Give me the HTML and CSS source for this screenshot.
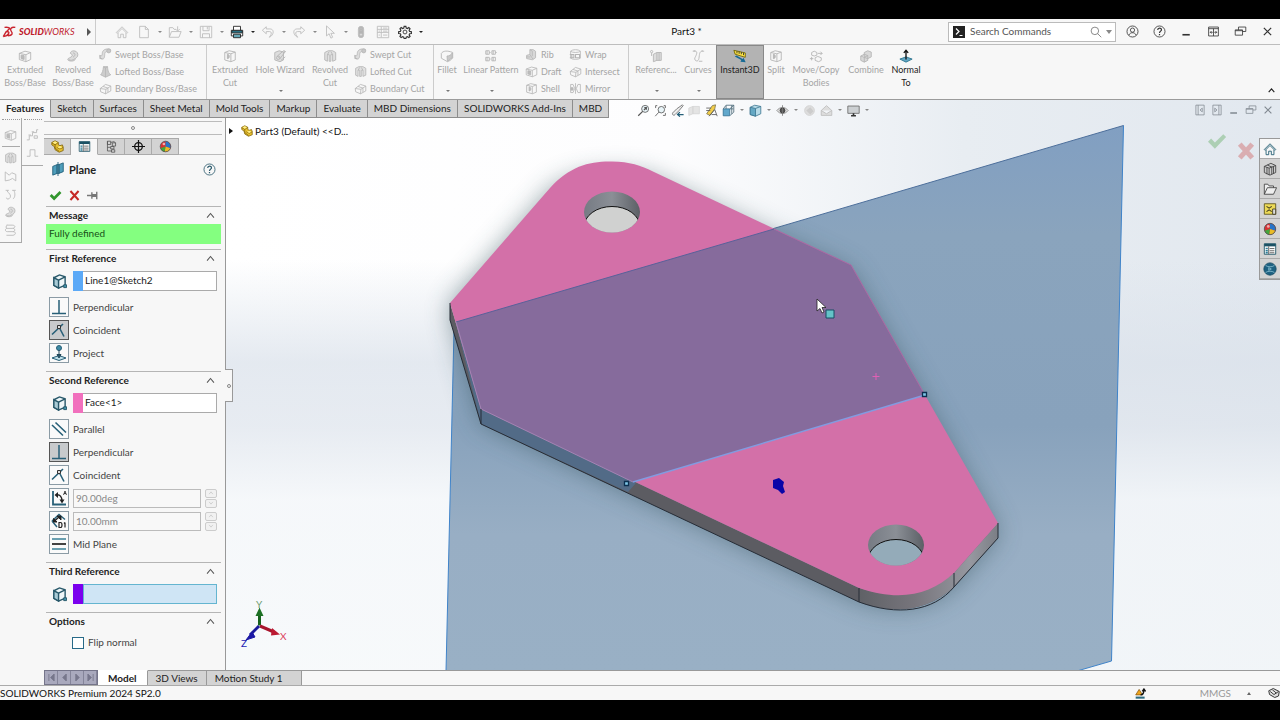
FILE: index.html
```html
<!DOCTYPE html>
<html lang="en">
<head>
<meta charset="utf-8">
<title>Part3 * - SOLIDWORKS</title>
<link rel="stylesheet" href="styles.css">
</head>
<body>
<svg class="defs" aria-hidden="true">
  <symbol id="home" viewBox="0 0 16 16"><path d="M1.500 8.500 8 2l6.500 6.500-1 1L8 4 2.500 9.500zM3.500 9v5.500h3v-4h3v4h3V9"/></symbol>
  <symbol id="doc" viewBox="0 0 16 16"><path d="M3 1.500h6.500L13 5v9.500H3zM9.500 1.500V5H13"/></symbol>
  <symbol id="open" viewBox="0 0 16 16"><path d="M1.500 14V3h4l1.500 2h2M1.500 14 4 7.500h11L12.500 14zM11 1.500v5M8.500 4.500 11 7l2.500-2.500"/></symbol>
  <symbol id="save" viewBox="0 0 16 16"><path d="M1.500 1.500h13v13h-13zM4.500 1.500v5h7v-5M4 14.500V10h8v4.500M9.500 2v3"/></symbol>
  <symbol id="print" viewBox="0 0 16 16"><path d="M4 6V1.500h8V6M1.500 6h13v6.500h-13z" stroke="#222" fill="#fff"/><path d="M2 6.500h12V9H2z" fill="#2b7f96" stroke="#222"/><path d="M4 10.500h8v4H4z" fill="#67a9b8" stroke="#222"/></symbol>
  <symbol id="undo" viewBox="0 0 16 16"><path d="M6 2 1.500 6 6 10V7.500h4c2 0 2.500 2.500.5 5l-1 1.500c5-2 6.500-9.500.5-9.500H6z"/></symbol>
  <symbol id="redo" viewBox="0 0 16 16"><path d="M10 2l4.500 4L10 10V7.500H6C4 7.500 3.500 10 5.500 12.500l1 1.500C1.500 12 0 4.500 6 4.500h4z"/></symbol>
  <symbol id="arrow" viewBox="0 0 16 16"><path d="M4 1v11.500l3-2.500 2 5 2-1-2-4.500h4z"/></symbol>
  <symbol id="light" viewBox="0 0 16 16"><rect x="5" y="1.500" width="6" height="13" rx="3" fill="#b5b5b5"/><circle cx="8" cy="5" r="1.500"/><circle cx="8" cy="11" r="1.500" fill="#ddd"/></symbol>
  <symbol id="list" viewBox="0 0 16 16"><path d="M1.500 1.500h13v13h-13zM1.500 5h13M1.500 8.500h13M6 2v12M8 3.500h5M8 7h5M8 11.500h5M3 7h1.500M3 11.500h1.500"/></symbol>
  <symbol id="gear" viewBox="0 0 16 16"><circle cx="8" cy="8" r="2.200"/><path d="M7 1.500h2l.4 2 1.300.6 1.700-1.200 1.400 1.400-1.100 1.700.6 1.300 2 .4v2l-2 .3-.6 1.300 1.100 1.700-1.400 1.400-1.700-1.100-1.300.6-.4 1.600H7l-.4-1.600-1.300-.6-1.700 1.100-1.400-1.400 1.100-1.700-.6-1.300-2-.3v-2l2-.4.6-1.300-1.100-1.700 1.400-1.400 1.700 1.200 1.300-.6z" stroke-width="1.300"/></symbol>
  <symbol id="cube" viewBox="0 0 16 16"><path d="M1.500 5 8 2.500 14.500 4v8L9 14.500 1.500 12zM1.500 5 9 6.500 14.500 4M9 6.500v8"/><path d="M3.500 7v4l3.500 1V7.500z" fill="#bbb"/></symbol>
  <symbol id="revolve" viewBox="0 0 16 16"><path d="M5 5c0-4 8-4 8.500 1 .5 4-3 4-3 5.500 0 3-8 3-8.500.5 0-2 4-2 5-4s-1-2-2-3z" fill="#ddd"/><path d="M8 4.500c3 0 3 3 0 5M3 12c2 1.500 5 1 7-1"/></symbol>
  <symbol id="sweep" viewBox="0 0 16 16"><path d="M2 13c4 2 5-1 5-5s3-4 5-3l2-3c-5-2-10 0-10 5 0 3-1 3-3 2z" fill="#ddd"/><circle cx="12" cy="3.500" r="2.500" fill="#c7c7c7"/><path d="M1 9v4h3"/></symbol>
  <symbol id="loft" viewBox="0 0 16 16"><path d="M5.500 2h5c.5 6 1.500 8 4 10L8 15l-6-3c2-2 3-5 3.500-10z" fill="#ccc"/><path d="M5.500 2 8 3.500 10.500 2M8 3.500V15"/></symbol>
  <symbol id="boundary" viewBox="0 0 16 16"><path d="M1.500 8 8 3l6.500 2v6L8 14.500 2 12zM1.500 8l7 1 6-4M8.500 9l-.5 5.500M5 5.500l6 2v5"/></symbol>
  <symbol id="cut" viewBox="0 0 16 16"><path d="M2 4l5-2 7 1.500v9L9 14.500l-7-2zM2 4l7 1.500 5-2M9 5.500v9"/><path d="M5 6c3 0 3 5 0 5z" fill="#bbb"/></symbol>
  <symbol id="hole" viewBox="0 0 16 16"><path d="M2 4l5-2 5 1.500v9L8 14.500l-6-2zM5 8l7-6 2 1-6 8z" fill="#ddd"/><circle cx="6" cy="10" r="2"/><path d="M9 13l5-4M13 2l1.500 1"/></symbol>
  <symbol id="revcut" viewBox="0 0 16 16"><path d="M2 4l4-2 5 0 3.500 2v8.500L11 14V6.500H9V14H7V6.500H5V14l-3-1.500z" fill="#e0e0e0"/><path d="M5 6.500 7 3M11 6.500 9 3"/></symbol>
  <symbol id="fillet" viewBox="0 0 16 16"><path d="M1.500 5c2-3 7-3.500 13-1v6c-1 2-4 4-6 4.500l-7-4z"/><path d="M8 8c2 0 5-1 6-3.500V10L8.500 14z" fill="#c9c9c9"/></symbol>
  <symbol id="pattern" viewBox="0 0 16 16"><path d="M2 2h4v4H2zM9 2h4v4H9zM2 9.500h4v4H2zM9 9.500h4v4H9zM3.500 2v4M10.500 2v4M3.500 9.500v4M10.500 9.500v4M6 4h1.500M13 4h1.500M6 11.500h1.500"/></symbol>
  <symbol id="rib" viewBox="0 0 16 16"><path d="M2 13V9l4-1V2h4l3 2v8l-4 2.500zM6 8l4 6M6 2l3 2v6" fill="#d8d8d8"/><path d="M1.500 11h5"/></symbol>
  <symbol id="wrap" viewBox="0 0 16 16"><path d="M2 4c2-2.500 10-2.500 12 0v8.500c-2 2-10 2-12 0zM2 4c2 2 10 2 12 0"/><path d="M1 8h5v4H1M8 8h5v4H8zM3.500 8v4" stroke-width="1.300"/></symbol>
  <symbol id="mirror" viewBox="0 0 16 16"><path d="M2 3v10h3l2-5-2-5zM14 3v10h-3L9 8l2-5zM8 1.500v13"/><path d="M2.500 7H5v3H2.500z" fill="#bbb"/></symbol>
  <symbol id="refgeo" viewBox="0 0 16 16"><circle cx="3" cy="3" r="1.300"/><path d="M5 6l4-2v9l-4 1.500zM9 4h5v9H9M3 4.500V8M11.500 4v9" fill="#ddd"/></symbol>
  <symbol id="curves" viewBox="0 0 16 16"><path d="M3 2c6 0 3 5 1.500 8S8 16 9 11s0-8 4.500-9M2 2.500h3M12 2.500h3M9 14h4"/></symbol>
  <symbol id="instant" viewBox="0 0 16 16"><path d="M1 1.500l13 3V9.500L2.500 6z" fill="#ffe545" stroke="#6f6200"/><path d="M4.500 2.500V5M7 3v2.500M9.500 3.500V6M12 4.500V7" stroke="#333"/><path d="M2 8.500l7.500 4-1 2 6 .5-2.500-5-1 1.500-7-4z" fill="#176a94" stroke="none"/></symbol>
  <symbol id="movecopy" viewBox="0 0 16 16"><path d="M3 4l3-1.500L9 4v3L6 8 3 7zM7 10l3-1.500 4 1.500v3l-3 1.500-4-1.500zM1 11h4M3 9v4M10 5h5M13 3l2 2-2 2"/></symbol>
  <symbol id="combine" viewBox="0 0 16 16"><path d="M6 4l4-2 4 1.500V9l-4 2-4-1.500zM2 8l4-2 4 1.500V13l-4 2-4-2zM2 8l4 1.500 4-2M6 9.500V15" fill="#d9d9d9"/></symbol>
  <symbol id="normal" viewBox="0 0 16 16"><path d="M1 11.500 8 9l7 2.500L8 15z" fill="#63a7c4" stroke="#29728e"/><path d="M8 12V2M5.500 4.500 8 1.500 10.500 4.500" stroke="#111" stroke-width="1.500"/></symbol>
  <symbol id="user" viewBox="0 0 16 16"><circle cx="8" cy="8" r="6.800"/><circle cx="8" cy="6.300" r="2.600"/><path d="M3.500 12.500c1.500-4 7.500-4 9 0"/></symbol>
  <symbol id="help" viewBox="0 0 16 16"><circle cx="8" cy="8" r="6.800"/><path d="M5.800 6.200c0-3 4.600-3 4.600-.2C10.400 7.500 8 7.700 8 9.800M8 11v1.600" stroke-width="1.500"/></symbol>
  <symbol id="min" viewBox="0 0 16 16"><path d="M3 12h9" stroke-width="2"/></symbol>
  <symbol id="span" viewBox="0 0 16 16"><path d="M2 2.500h12v11H2zM2 4.500h12M8 4.500v9M4 9h3M9 9h3M5.500 7.500 4 9l1.500 1.500M10.500 7.500 12 9l-1.500 1.500"/></symbol>
  <symbol id="restore" viewBox="0 0 16 16"><path d="M5.500 6V2.500h9V8h-4M1.500 6h9v6.500h-9zM1.500 7h9"/></symbol>
  <symbol id="close" viewBox="0 0 16 16"><path d="M3.500 3.500l9 9M12.500 3.500l-9 9" stroke-width="1.500"/></symbol>
  <symbol id="up" viewBox="0 0 16 16"><path d="M3 11l5-6 5 6"/></symbol>
  <symbol id="glass" viewBox="0 0 16 16"><circle cx="6.500" cy="6.500" r="5"/><path d="M10.200 10.200 15 15"/></symbol>
  <symbol id="zoomfit" viewBox="0 0 16 16"><circle cx="10" cy="6" r="4.300" fill="#e8f4f8"/><path d="M7 9l-5.500 5.500M8.500 7.500l3-3M11.500 7V4.500H9" stroke-width="1.500"/></symbol>
  <symbol id="zoomarea" viewBox="0 0 16 16"><circle cx="9" cy="7" r="4" fill="#e8f4f8"/><path d="M6 10l-4.500 5M2 2h2M2 2v3M14 2h-2M14 2v3M14 14v-3M14 14h-3"/></symbol>
  <symbol id="prev" viewBox="0 0 16 16"><path d="M14 1 7 6l-5 5c-1 2 1.500 4 3 2l5-5 5-6z" fill="#eee" stroke="#666"/><path d="M15.500 13H9M11 10l-3 3 3 2.500" stroke="#245f78" stroke-width="1.500"/></symbol>
  <symbol id="section" viewBox="0 0 16 16"><path d="M1 5l5-2v9l-5 2zM6 3h8v9H6z" fill="#e4e4e4" stroke="#d5d5d5"/></symbol>
  <symbol id="dynamic" viewBox="0 0 16 16"><path d="M2 12 9 2l4-1-1 5-6 8z" fill="#f2cd4a" stroke="#7d754c"/><path d="M1.500 5h6M1.500 8h5M5 15l7-8 3 8M8 13h6" stroke="#555"/></symbol>
  <symbol id="orient" viewBox="0 0 16 16"><path d="M1.500 6h8v8.500h-8z" fill="#61a8cc" stroke="#316f91"/><path d="M1.500 6 5 1.500h9.500V10L10 14M9.500 6l5-4.500M5 2v4M10 6h4M12 1.500V12" stroke="#4a6878"/></symbol>
  <symbol id="display" viewBox="0 0 16 16"><path d="M1.500 4 7 1.500 14.500 3v9L8 15l-6.500-2z" fill="#b7dbe8" stroke="#3b7590"/><path d="M1.500 4 8 5.500V15l-6.500-2z" fill="#65a8c4" stroke="#3b7590"/><path d="M8 5.500 14.500 3" stroke="#3b7590"/></symbol>
  <symbol id="eye" viewBox="0 0 16 16"><path d="M1 8c4-5 10-5 14 0-4 5-10 5-14 0z" fill="#ddd" stroke="#888"/><circle cx="8" cy="8" r="3" fill="#555" stroke="#333"/><path d="M8 1.500v13" stroke="#777"/></symbol>
  <symbol id="ball" viewBox="0 0 16 16"><circle cx="8" cy="8" r="6" fill="#ddd" stroke="#d0d0d0"/><path d="M4 8l5-4 4 5-4 4z" fill="#ccc" stroke="none"/></symbol>
  <symbol id="scene" viewBox="0 0 16 16"><path d="M1.500 8 8 2l6.500 6v6h-13zM1.500 8l6.500 4 6.500-4" fill="#ddd" stroke="#bbb"/></symbol>
  <symbol id="monitor" viewBox="0 0 16 16"><path d="M1 2.500h14v9H1z" fill="#ccd0d3" stroke="#666"/><path d="M5 14.500h6M8 11.500v3" stroke="#333" stroke-width="2"/></symbol>
  <symbol id="paneleft" viewBox="0 0 16 16"><path d="M2.500 1.500h11v13h-11zM5.500 1.500v13M11 5.500 8 8l3 2.500z"/></symbol>
  <symbol id="paneright" viewBox="0 0 16 16"><path d="M2.500 1.500h11v13h-11zM10.500 1.500v13M5 5.500 8 8l-3 2.500z"/></symbol>
  <symbol id="part" viewBox="0 0 16 16"><path d="M1 6V3l4-2 4 2v3l2 1 3-1 1 3v4l-5 2-5-3-1-4z" fill="#eac22f" stroke="#80640c"/><path d="M1 3.500 5 6l4-3M5 6v4l5 4M7 9l4 2 4-2" stroke="#80640c"/><path d="M2 3l3-1.500L8 3 5 5zM8 9l3-1.500L14 9l-3 1.500z" fill="#fff08a" stroke="none"/></symbol>
  <symbol id="props" viewBox="0 0 16 16"><path d="M1.500 2h13v12h-13z" fill="#fff" stroke="#1b5265"/><path d="M1.500 3.500h13" stroke="#1b5265" stroke-width="3"/><path d="M3 7.500h2.500M3 10h2.500M3 12.300h2.500" stroke="#2d7e98" stroke-width="1.600"/><path d="M7.500 7.500H13M7.500 10H13M7.500 12.300H13M6.500 5v9" stroke="#555"/></symbol>
  <symbol id="config" viewBox="0 0 16 16"><path d="M3 1.500h4v4H3zM9 3.500h4v4H9zM3 1.500v12M3 9h4M7 8h4v3H7zM3 13.500h5M8 12h4v3H8zM7 3l4-1 2 1.500" stroke="#555"/></symbol>
  <symbol id="target" viewBox="0 0 16 16"><circle cx="8" cy="8" r="4.700" stroke="#111" stroke-width="1.600"/><path d="M8 0v16M0 8h16" stroke="#111" stroke-width="1.500"/></symbol>
  <symbol id="appear" viewBox="0 0 16 16"><circle cx="8" cy="8" r="6.500" fill="#d83232" stroke="none"/><path d="M8 8V1.500A6.500 6.500 0 0 1 14 10z" fill="#2874c7" stroke="none"/><path d="M8 8l6 2a6.500 6.500 0 0 1-7 4.500z" fill="#e9bc26" stroke="none"/><path d="M8 8l-1 6.500A6.500 6.500 0 0 1 1.800 10z" fill="#42a63b" stroke="none"/><circle cx="8" cy="8" r="6.500" stroke="#555"/><circle cx="6" cy="5" r="1.600" fill="#fff" opacity=".6" stroke="none"/></symbol>
  <symbol id="plane" viewBox="0 0 16 16"><path d="M2 5l5-2v10l-5 2zM9 3l5-2v10l-5 2z" fill="#4f9ebb" stroke="#1e5d78"/><path d="M7 3l2 0v10H7z" fill="#8bc5d8" stroke="#1e5d78"/><path d="M8 0v16" stroke="#1e5d78"/></symbol>
  <symbol id="check" viewBox="0 0 16 16"><path d="M.8 8.600 3.300 6l3 3.200L13 2.500 15.300 4.800 6.300 14.200z" stroke="none"/></symbol>
  <symbol id="cross" viewBox="0 0 16 16"><path d="M3 2.500 13 13.500M13 2.500 3 13.500"/></symbol>
  <symbol id="pin" viewBox="0 0 16 16"><path d="M0 8h6M6 4v8M6 7h5v2H6zM12 3.500v9" stroke="#777" stroke-width="1.700"/></symbol>
  <symbol id="entity" viewBox="0 0 16 16"><path d="M2 4l6-3 6 2v9l-7 3-5-3z" fill="#eef6f8" stroke="#28586a" stroke-width="1.500"/><path d="M2 4l5 2.500V15l-5-3z" fill="#a9cbd6" stroke="#28586a" stroke-width="1.500"/><path d="M7 6.500 14 3" stroke="#28586a" stroke-width="1.500"/><path d="M12.500 11.500h3v3h-3z" fill="#4398b0" stroke="#28586a"/></symbol>
  <symbol id="perp" viewBox="0 0 16 16"><path d="M8 1v13M1 14.500h14" stroke="#286078" stroke-width="1.500"/></symbol>
  <symbol id="coin" viewBox="0 0 16 16"><path d="M1 12.500 12 2M8 5l5 9.500" stroke="#286078" stroke-width="1.600"/><path d="M6.500 3.500h3v3h-3z" fill="#ddd" stroke="#333"/></symbol>
  <symbol id="proj" viewBox="0 0 16 16"><path d="M1 13l7-2.500 7 2.500-7 2.500z" fill="#bfe0ea" stroke="#286078"/><circle cx="8" cy="3" r="2.500" fill="#3e8ba5" stroke="#286078"/><path d="M8 5v6M6 9.500 8 13l2-3.500z" fill="#286078" stroke="#24485a"/></symbol>
  <symbol id="para" viewBox="0 0 16 16"><path d="M1 4l11 10.500M4.500 1.500 15 11.500" stroke="#286078" stroke-width="1.600"/></symbol>
  <symbol id="angle" viewBox="0 0 16 16"><path d="M2 1v13.500h13" stroke="#286078" stroke-width="1.800"/><path d="M5 5c4-1 6 2 6 6" stroke="#222" stroke-width="1.500"/><path d="M7 2v6L3.500 5zM8.500 9.500h5L11 13.500z" fill="#222" stroke="none"/><path d="M12.500 5l1.500-4 1.500 4M13 3.500h2" stroke="#222" stroke-width=".8"/></symbol>
  <symbol id="dist" viewBox="0 0 16 16"><path d="M1 8 8 1.500l6 5M1 8l5 6" stroke="#286078" stroke-width="1.500"/><path d="M4 7.500 8 4" stroke="#222" stroke-width="1.500"/><path d="M2.500 9V5.500L6 9zM6 3h4v4z" fill="#222" stroke="#222"/><path d="M8 9.500h1.500c2 0 2 5 0 5H8zM14 9.500v5M13 10.500l1-1" stroke="#222" stroke-width="1.200"/></symbol>
  <symbol id="mid" viewBox="0 0 16 16"><path d="M1 3h14M1 13h14" stroke="#3b8198" stroke-width="1.700"/><path d="M1 8h14" stroke="#222" stroke-width="1.700"/></symbol>
  <symbol id="library" viewBox="0 0 16 16"><path d="M1.500 5 9 1.500 14.500 4v8L8 15l-6.500-3zM1.500 5 7 7l7.500-3M4.500 6v8M7 7v8M10 6v8M12 5v8M5 3.500 10.500 6" stroke="#444" fill="#ccc"/></symbol>
  <symbol id="folder" viewBox="0 0 16 16"><path d="M1.500 14V2.500h4L7 4.500h5v2M1.500 14 5 6.500h10.500L12 14z" stroke="#444" fill="#eee"/></symbol>
  <symbol id="palette" viewBox="0 0 16 16"><path d="M1.500 2h13v12h-13z" fill="#ecd955" stroke="#5c5420"/><path d="M4 5l3 2 3-2M4 11l3-2 3 2" stroke="#443e20" stroke-width="1.200"/><path d="M11 8h3.500v6H11z" fill="#ddd" stroke="#443e20"/></symbol>
  <symbol id="globe" viewBox="0 0 16 16"><circle cx="8" cy="8" r="7" fill="#1e6181" stroke="#174b64"/><path d="M3 4c3 2 7 2 10 0M3 12c3-2 7-2 10 0M6.500 6.500v3l3-1.500z" stroke="#9fd1df" stroke-width=".8"/></symbol>
  <symbol id="wave" viewBox="0 0 16 16"><path d="M1.500 14V3l5 4 3-3 5 2v8l-4-3-4 2z"/></symbol>
  <symbol id="hook" viewBox="0 0 16 16"><path d="M2 3.500h4M4 3.500c0 4 4 3 4 7s-5 5-5 2M10 3.500h4.500M12 3.500c2 3 2 9-1 10.500"/></symbol>
  <symbol id="coil" viewBox="0 0 16 16"><path d="M3 2h7c5 0 4 4 0 4H4c-3 0-3 4 0 4h7c4 0 4 4 0 4.500H3M4 2c-2 1-2 4 0 4M11 6c3 0 3 4 0 4"/></symbol>
  <symbol id="step" viewBox="0 0 16 16"><path d="M1 14h3V9h4V5h5V1.500h2M3 8h3M7 4h3M10 9h4v3h-4z"/></symbol>
  <symbol id="pulse" viewBox="0 0 16 16"><path d="M1 12h4V4h6v8h4"/></symbol>
</svg>

<div class="app">
  <header class="titlebar">
    <div class="brand">
      <svg class="ds" viewBox="0 0 18 16"><path d="M3 2.500c5-.5 7 .5 5.500 2L5 8M1.500 13.500 5 7.500c6-.5 3 5-3.500 6M16 2.500c-5-1-7 2-5 4.500s2 5-4 5.500" fill="none" stroke="#c9252f" stroke-width="1.700"/></svg>
      <span class="wordmark"><b>SOLID</b>WORKS</span>
      <button class="caret-right" aria-label="Expand menu"></button>
    </div>
    <nav class="quick">
      <button class="ico" aria-label="Home"><svg><use href="#home"/></svg></button>
      <button class="ico" aria-label="New"><svg><use href="#doc"/></svg></button><button class="dd" aria-label="New options"></button>
      <button class="ico" aria-label="Open"><svg><use href="#open"/></svg></button><button class="dd" aria-label="Open options"></button>
      <button class="ico" aria-label="Save"><svg><use href="#save"/></svg></button><button class="dd" aria-label="Save options"></button>
      <button class="ico" aria-label="Print"><svg><use href="#print"/></svg></button><button class="dd on" aria-label="Print options"></button>
      <button class="ico" aria-label="Undo"><svg><use href="#undo"/></svg></button><button class="dd" aria-label="Undo options"></button>
      <button class="ico" aria-label="Redo"><svg><use href="#redo"/></svg></button><button class="dd" aria-label="Redo options"></button>
      <button class="ico" aria-label="Select"><svg><use href="#arrow"/></svg></button><button class="dd" aria-label="Select options"></button>
      <button class="ico" aria-label="Rebuild"><svg><use href="#light"/></svg></button>
      <button class="ico" aria-label="File properties"><svg><use href="#list"/></svg></button>
      <button class="ico dark" aria-label="Options"><svg><use href="#gear"/></svg></button><button class="dd on" aria-label="More options"></button>
    </nav>
    <h1 class="doc-title">Part3 *</h1>
    <div class="search">
      <svg class="prompt" viewBox="0 0 12 12"><path d="M0 0h12v12H0z" fill="#222"/><path d="M3 2.500 6 5.500l-3 3M6.500 9.500h3" fill="none" stroke="#fff" stroke-width="1.200"/></svg>
      <input type="text" placeholder="Search Commands" aria-label="Search Commands">
      <svg class="mag"><use href="#glass"/></svg>
      <button class="dd grey" aria-label="Search options"></button>
    </div>
    <div class="window-controls">
      <button aria-label="Account"><svg><use href="#user"/></svg></button>
      <button aria-label="Help"><svg><use href="#help"/></svg></button>
      <button aria-label="Minimize"><svg><use href="#min"/></svg></button>
      <button aria-label="Span displays"><svg><use href="#span"/></svg></button>
      <button aria-label="Restore"><svg><use href="#restore"/></svg></button>
      <button aria-label="Close"><svg><use href="#close"/></svg></button>
    </div>
  </header>

  <section class="ribbon">
    <div class="group">
      <button class="big w48"><svg><use href="#cube"/></svg><span>Extruded<br>Boss/Base</span></button>
      <button class="big w48"><svg><use href="#revolve"/></svg><span>Revolved<br>Boss/Base</span></button>
      <div class="stack w108">
        <button><svg><use href="#sweep"/></svg>Swept Boss/Base</button>
        <button><svg><use href="#loft"/></svg>Lofted Boss/Base</button>
        <button><svg><use href="#boundary"/></svg>Boundary Boss/Base</button>
      </div>
    </div>
    <div class="group">
      <button class="big w44"><svg><use href="#cut"/></svg><span>Extruded<br>Cut</span></button>
      <button class="big w56"><svg><use href="#hole"/></svg><span>Hole Wizard</span><i class="dd"></i></button>
      <button class="big w44"><svg><use href="#revcut"/></svg><span>Revolved<br>Cut</span></button>
      <div class="stack w80">
        <button><svg><use href="#sweep"/></svg>Swept Cut</button>
        <button><svg><use href="#revcut"/></svg>Lofted Cut</button>
        <button><svg><use href="#boundary"/></svg>Boundary Cut</button>
      </div>
    </div>
    <div class="group">
      <button class="big w24"><svg><use href="#fillet"/></svg><span>Fillet</span><i class="dd"></i></button>
      <button class="big w64"><svg><use href="#pattern"/></svg><span>Linear Pattern</span><i class="dd"></i></button>
      <div class="stack w44">
        <button><svg><use href="#rib"/></svg>Rib</button>
        <button><svg><use href="#cube"/></svg>Draft</button>
        <button><svg><use href="#cut"/></svg>Shell</button>
      </div>
      <div class="stack w60">
        <button><svg><use href="#wrap"/></svg>Wrap</button>
        <button><svg><use href="#boundary"/></svg>Intersect</button>
        <button><svg><use href="#mirror"/></svg>Mirror</button>
      </div>
    </div>
    <div class="group last">
      <button class="big w48"><svg><use href="#refgeo"/></svg><span>Referenc...</span><i class="dd"></i></button>
      <button class="big w36"><svg><use href="#curves"/></svg><span>Curves</span><i class="dd"></i></button>
      <button class="big w48 live pressed" aria-pressed="true"><svg><use href="#instant"/></svg><span>Instant3D</span></button>
      <button class="big w24"><svg><use href="#cut"/></svg><span>Split</span></button>
      <button class="big w56"><svg><use href="#movecopy"/></svg><span>Move/Copy<br>Bodies</span></button>
      <button class="big w44"><svg><use href="#combine"/></svg><span>Combine</span></button>
      <button class="big w36 live"><svg><use href="#normal"/></svg><span>Normal<br>To</span></button>
    </div>
    <button class="collapse" aria-label="Collapse ribbon"><svg><use href="#up"/></svg></button>
  </section>

  <main class="work">
    <nav class="tabs">
      <button class="active">Features</button><button>Sketch</button><button>Surfaces</button><button>Sheet Metal</button><button>Mold Tools</button><button>Markup</button><button>Evaluate</button><button>MBD Dimensions</button><button>SOLIDWORKS Add-Ins</button><button>MBD</button>
    </nav>

    <aside class="side">
      <div class="rail">
        <button aria-label="Box"><svg><use href="#cube"/></svg></button>
        <hr>
        <button aria-label="Cylinder"><svg><use href="#revcut"/></svg></button>
        <button aria-label="Surface"><svg><use href="#wave"/></svg></button>
        <button aria-label="Curve"><svg><use href="#hook"/></svg></button>
        <button aria-label="Body"><svg><use href="#revolve"/></svg></button>
        <button aria-label="Spring"><svg><use href="#coil"/></svg></button>
      </div>
      <div class="rail">
        <button aria-label="Step"><svg><use href="#step"/></svg></button>
        <button aria-label="Profile"><svg><use href="#pulse"/></svg></button>
      </div>
      <div class="panel">
        <div class="grip"><span class="dot"></span></div>
        <div class="manager-tabs">
          <button aria-label="Feature tree"><svg><use href="#part"/></svg></button>
          <button class="active" aria-label="Properties"><svg><use href="#props"/></svg></button>
          <button aria-label="Configurations"><svg><use href="#config"/></svg></button>
          <button aria-label="Dimensions"><svg><use href="#target"/></svg></button>
          <button aria-label="Appearances"><svg><use href="#appear"/></svg></button>
        </div>
        <div class="panel-title">
          <svg><use href="#plane"/></svg><h2>Plane</h2>
          <button aria-label="Help"><svg><use href="#help"/></svg></button>
        </div>
        <div class="confirm">
          <button class="ok" aria-label="OK"><svg><use href="#check"/></svg></button>
          <button class="cancel" aria-label="Cancel"><svg><use href="#cross"/></svg></button>
          <button aria-label="Keep visible"><svg><use href="#pin"/></svg></button>
        </div>
        <section class="box">
          <h3>Message<svg><use href="#up"/></svg></h3>
          <p class="message">Fully defined</p>
        </section>
        <section class="box">
          <h3>First Reference<svg><use href="#up"/></svg></h3>
          <div class="pick"><svg><use href="#entity"/></svg><span class="swatch blue"></span><input type="text" value="Line1@Sketch2" aria-label="First reference"></div>
          <div class="opts">
            <div class="opt"><button id="r1a"><svg><use href="#perp"/></svg></button><label for="r1a">Perpendicular</label></div>
            <div class="opt"><button id="r1b" class="down"><svg><use href="#coin"/></svg></button><label for="r1b">Coincident</label></div>
            <div class="opt"><button id="r1c"><svg><use href="#proj"/></svg></button><label for="r1c">Project</label></div>
          </div>
        </section>
        <section class="box">
          <h3>Second Reference<svg><use href="#up"/></svg></h3>
          <div class="pick"><svg><use href="#entity"/></svg><span class="swatch pink"></span><input type="text" value="Face&lt;1&gt;" aria-label="Second reference"></div>
          <div class="opts">
            <div class="opt"><button id="r2a"><svg><use href="#para"/></svg></button><label for="r2a">Parallel</label></div>
            <div class="opt"><button id="r2b" class="down"><svg><use href="#perp"/></svg></button><label for="r2b">Perpendicular</label></div>
            <div class="opt"><button id="r2c"><svg><use href="#coin"/></svg></button><label for="r2c">Coincident</label></div>
            <div class="opt"><button aria-label="Angle"><svg><use href="#angle"/></svg></button><input type="text" value="90.00deg" aria-label="Angle" disabled><span class="spin"><button aria-label="Increase angle"><svg><use href="#up"/></svg></button><button aria-label="Decrease angle"><svg class="flip"><use href="#up"/></svg></button></span></div>
            <div class="opt"><button aria-label="Distance"><svg><use href="#dist"/></svg></button><input type="text" value="10.00mm" aria-label="Offset distance" disabled><span class="spin"><button aria-label="Increase distance"><svg><use href="#up"/></svg></button><button aria-label="Decrease distance"><svg class="flip"><use href="#up"/></svg></button></span></div>
            <div class="opt"><button id="r2f"><svg><use href="#mid"/></svg></button><label for="r2f">Mid Plane</label></div>
          </div>
        </section>
        <section class="box">
          <h3>Third Reference<svg><use href="#up"/></svg></h3>
          <div class="pick focus"><svg><use href="#entity"/></svg><span class="swatch violet"></span><input type="text" aria-label="Third reference"></div>
        </section>
        <section class="box">
          <h3>Options<svg><use href="#up"/></svg></h3>
          <label class="flipnormal"><input type="checkbox">Flip normal</label>
        </section>
      </div>
    </aside>

    <section class="viewport">
      <svg class="scene-view" viewBox="226 100 1054 571" preserveAspectRatio="xMidYMin slice" role="img" aria-label="Plate with reference plane">
        <defs>
          <linearGradient id="bg" x1="0" x2="1" y1="0" y2="0"><stop offset="0" stop-color="#fff"/><stop offset=".42" stop-color="#fdfdfe"/><stop offset=".7" stop-color="#e8edf2"/><stop offset="1" stop-color="#e2e8ef"/></linearGradient>
          <linearGradient id="band" x1="0" x2="0" y1="0" y2="1"><stop offset=".28" stop-color="#dbe2eb" stop-opacity="0"/><stop offset=".46" stop-color="#dbe2eb" stop-opacity=".75"/><stop offset=".57" stop-color="#dfe5ed" stop-opacity=".75"/><stop offset=".7" stop-color="#f3f6f9" stop-opacity=".8"/><stop offset="1" stop-color="#f5f8fa" stop-opacity=".8"/></linearGradient>
          <linearGradient id="sheet" x1="0" x2="0" y1="0" y2="1"><stop offset="0" stop-color="#819fc2"/><stop offset=".2" stop-color="#8aa4bd"/><stop offset=".55" stop-color="#88a2bc"/><stop offset=".75" stop-color="#98aec4"/><stop offset="1" stop-color="#99b0c5"/></linearGradient>
          <linearGradient id="wall" x1="0" x2="1"><stop offset="0" stop-color="#737881"/><stop offset=".5" stop-color="#8b8f96"/><stop offset="1" stop-color="#55595f"/></linearGradient>
          <linearGradient id="rim" x1="0" x2="1"><stop offset="0" stop-color="#5f6166"/><stop offset=".4" stop-color="#77757c"/><stop offset=".8" stop-color="#9698a0"/><stop offset="1" stop-color="#7b7e85"/></linearGradient>
          <filter id="soft" x="-20%" y="-20%" width="140%" height="140%"><feGaussianBlur stdDeviation="12"/></filter>
          <clipPath id="h1"><ellipse cx="612" cy="212" rx="28" ry="20.500"/></clipPath>
          <clipPath id="h2"><ellipse cx="896" cy="545" rx="28" ry="20.500"/></clipPath>
        </defs>
        <path d="M226 100h1054v571H226z" fill="url(#bg)"/>
        <path d="M226 100h1054v571H226z" fill="url(#band)"/>
        <path d="M456 322 1123.500 125.500 1111.500 661 1077 671H446l8-341z" fill="url(#sheet)"/>
        <path d="M1123.500 125.500 1111.500 661 1077 671M446 671l8-341" fill="none" stroke="#3f83c9"/>
        <path d="M456 322 1123.500 125.500" fill="none" stroke="#4d6f9b"/>
        <path d="M450 303 552 187Q590 165 650 175L851 270 998 528V538L954 588Q915 620 859 602L481 424 450 320z" fill="#35525c" opacity=".5" filter="url(#soft)"/>
        <path d="M450 303 481 409 859 588Q910 606 954 573L998 523V538L954 587Q915 622 859 602L481 424 450 320z" fill="#5c5c62"/>
        <path d="M859 588Q910 606 954 573L998 523V538L954 587Q915 622 859 602z" fill="url(#rim)"/>
        <path d="M455 320 481 409 636 483 628 492 481 424z" fill="#526b87"/>
        <path d="M450 303 550 188C570 166 590 161 612 161.500 630 162 640 165 654 172L851 265 925 395 998 523 954 573C930 595 900 602 859 588L481 409z" fill="#d370a8"/>
        <path d="M456 322 774 229 851 265 925 395 633 482 481 409z" fill="#866b9c"/>
        <path d="M456 322 774 229" fill="none" stroke="#59619a"/>
        <path d="M633 482 925 395" fill="none" stroke="#829be0" stroke-width="1.500"/>
        <path d="M774 229 851 265 925 395" fill="none" stroke="#a96ba4"/>
        <path d="M456 322 481 409 633 482" fill="none" stroke="#a384b4"/>
        <path d="M450 303v17l31 104 378 178C897 616 933 612 954 587L998 538V523M481 409v15M859 588v14M954 573v14" fill="none" stroke="#262c36"/>
        <g clip-path="url(#h1)"><path d="M580 188h64v48h-64z" fill="url(#wall)"/><ellipse cx="612" cy="227" rx="28" ry="20.500" fill="#d0d1d0" stroke="#111"/></g>
        <g clip-path="url(#h2)"><path d="M864 520h64v50h-64z" fill="url(#wall)"/><ellipse cx="896" cy="560" rx="28" ry="20.500" fill="#94abb9" stroke="#111"/></g>
        <path d="M872.500 376.500h7M876 373v7" fill="none" stroke="#e060b4"/>
        <path d="M624.500 481.500h4v4h-4zM922.500 392.500h4v4h-4z" fill="#80c8e8" stroke="#0c3050" stroke-width="1.300"/>
        <path d="M773 480l6-2 5 4-1 4 2 6-3 2-4-4-5-2z" fill="#0a05a8"/>
        <path d="M817 299v12l3-2.500 2 4.500 2-1-2-4.500h4z" fill="#fff" stroke="#222" stroke-width=".8"/>
        <path d="M826 310h8v8h-8z" fill="#64c3c8" stroke="#174e64"/>
        <g class="triad">
          <path d="M259.500 625.500V612" stroke="#17631d" stroke-width="3"/><path d="M255.500 616 259.500 607.500l4 8.500z" fill="#1c7023"/>
          <path d="M260 626l14 6" stroke="#a9152c" stroke-width="3"/><path d="M272 628l8 6.500-9 1z" fill="#bb1932"/>
          <path d="M259 626l-9 9" stroke="#19199b" stroke-width="3"/><path d="M252 632l3 5-9 3z" fill="#1b18a5" stroke="#1b18a5"/>
          <text x="256" y="608" fill="#6f9d71">Y</text><text x="280" y="640" fill="#dc405b">X</text><text x="241" y="647" fill="#2525b5">Z</text>
        </g>
      </svg>
      <div class="overlay">
        <div class="top-row">
          <div class="headsup">
            <button class="ico" aria-label="Zoom to fit"><svg><use href="#zoomfit"/></svg></button>
            <button class="ico" aria-label="Zoom to area"><svg><use href="#zoomarea"/></svg></button>
            <button class="ico" aria-label="Previous view"><svg><use href="#prev"/></svg></button>
            <button class="ico" aria-label="Section view"><svg><use href="#section"/></svg></button>
            <button class="ico" aria-label="Dynamic annotation"><svg><use href="#dynamic"/></svg></button>
            <button class="ico" aria-label="View orientation"><svg><use href="#orient"/></svg></button><button class="dd" aria-label="Orientation options"></button>
            <button class="ico" aria-label="Display style"><svg><use href="#display"/></svg></button><button class="dd" aria-label="Display options"></button>
            <button class="ico" aria-label="Hide or show"><svg><use href="#eye"/></svg></button><button class="dd" aria-label="Visibility options"></button>
            <button class="ico" aria-label="Edit appearance"><svg><use href="#ball"/></svg></button>
            <button class="ico" aria-label="Apply scene"><svg><use href="#scene"/></svg></button><button class="dd" aria-label="Scene options"></button>
            <button class="ico" aria-label="View settings"><svg><use href="#monitor"/></svg></button><button class="dd" aria-label="View setting options"></button>
          </div>
          <div class="doc-controls">
            <button aria-label="Collapse left"><svg><use href="#paneleft"/></svg></button>
            <button aria-label="Collapse right"><svg><use href="#paneright"/></svg></button>
            <button aria-label="Minimize document"><svg><use href="#min"/></svg></button>
            <button aria-label="Restore document"><svg><use href="#restore"/></svg></button>
            <button aria-label="Close document"><svg><use href="#close"/></svg></button>
          </div>
        </div>
        <div class="below">
          <div class="tree"><button class="caret-right small" aria-label="Expand tree"></button><svg><use href="#part"/></svg>Part3 (Default) &lt;&lt;D...</div>
          <div class="corner">
            <button class="ok" aria-label="Accept"><svg><use href="#check"/></svg></button>
            <button class="cancel" aria-label="Reject"><svg><use href="#cross"/></svg></button>
          </div>
          <nav class="taskpane">
            <button class="active" aria-label="Resources"><svg><use href="#home"/></svg></button>
            <button aria-label="Design library"><svg><use href="#library"/></svg></button>
            <button aria-label="File explorer"><svg><use href="#folder"/></svg></button>
            <button aria-label="View palette"><svg><use href="#palette"/></svg></button>
            <button aria-label="Appearances"><svg><use href="#appear"/></svg></button>
            <button aria-label="Custom properties"><svg><use href="#props"/></svg></button>
            <button aria-label="Forum"><svg><use href="#globe"/></svg></button>
          </nav>
        </div>
      </div>
      <button class="handle" aria-label="Resize panel"><span class="dot"></span></button>
    </section>
  </main>

  <nav class="sheets">
    <div class="sheet-nav">
      <button aria-label="First"><svg viewBox="0 0 8 8"><path d="M1 0v8M7 0 3 4l4 4z"/></svg></button>
      <button aria-label="Previous"><svg viewBox="0 0 8 8"><path d="M6 0 2 4l4 4z"/></svg></button>
      <button aria-label="Next"><svg viewBox="0 0 8 8"><path d="M2 0l4 4-4 4z"/></svg></button>
      <button aria-label="Last"><svg viewBox="0 0 8 8"><path d="M7 0v8M1 0l4 4-4 4z"/></svg></button>
    </div>
    <button class="sheet active">Model</button><button class="sheet">3D Views</button><button class="sheet wide">Motion Study 1</button>
    <div class="sheet-fill"></div>
  </nav>
  <footer class="status">
    <span>SOLIDWORKS Premium 2024 SP2.0</span>
    <svg class="warn" viewBox="0 0 16 16"><path d="M1 10 6 2l5 8z" fill="#f0a51c" stroke="#7a4b05"/><path d="M8 10c4 0 5-3 5-7M10.500 5 13 1.500 15.500 5" fill="none" stroke="#111" stroke-width="2"/><path d="M1 14h13" stroke="#2b6b80" stroke-width="3"/></svg>
    <span class="units">MMGS</span>
    <button class="unit-up" aria-label="Units"></button>
    <svg class="tag" viewBox="0 0 16 16"><path d="M1 5l6-3 8 4-1 6-5 2-7-4zM3 6l5 4 6-4M6 4l5 4" fill="#ddd" stroke="#333" stroke-width="1.300"/></svg>
  </footer>
</div>
</body>
</html>
```
FILE: styles.css
```css
* { box-sizing: border-box; }
body {
  margin: 0;
  background: #000;
  color: #222;
  font: 10px/13px Lato, "Open Sans", sans-serif;
}
h1, h2, h3, p { margin: 0; font-size: inherit; }
button, input { font: inherit; color: inherit; }
button {
  display: inline-flex;
  align-items: center;
  justify-content: center;
  margin: 0;
  padding: 0;
  border: 0;
  background: none;
}
svg { flex: none; width: 14px; height: 14px; fill: none; stroke: currentColor; overflow: hidden; }
.defs { position: absolute; width: 0; height: 0; }
.app { display: flex; flex-direction: column; height: 100vh; padding: 19px 0 20px; }

/* Title bar */
.titlebar { display: flex; align-items: center; height: 26px; background: #f7f7f7; border-bottom: 1px solid #bdbdbd; }
.brand { display: flex; align-items: center; align-self: stretch; width: 96px; padding: 0 4px 0 2px; border-right: 1px solid #ccc; color: #c0202c; }
.ds { width: 15px; height: 14px; }
.wordmark { margin-left: 2px; font-style: italic; font-size: 9px; }
.wordmark b { font-weight: 900; }
.caret-right { width: 0; height: 0; margin-left: auto; border: solid transparent; border-width: 4px 0 4px 4px; border-left-color: #555; }
.quick { display: flex; align-items: center; padding-left: 15px; color: #bdbdbd; }
.ico { width: 22px; height: 20px; }
.dark { color: #333; }
.dd { width: 9px; height: 10px; display: inline-flex; align-items: center; justify-content: center; color: #888; }
.dd::before { content: ""; border: solid transparent; border-width: 2px 2px 0; border-top-color: currentColor; }
.dd.on { color: #222; }
.dd.grey::before { border-width: 4px 3px 0; border-top-color: currentColor; }
.doc-title { flex: 1; text-align: center; font-weight: 400; color: #111; }
.search { display: flex; align-items: center; width: 168px; height: 20px; padding: 0 2px 0 4px; border: 1px solid #bbb; background: #fff; }
.prompt { width: 12px; height: 12px; }
.search input { flex: 1; min-width: 0; border: 0; padding: 0 5px; outline: 0; background: none; }
.search input::placeholder { color: #555; opacity: 1; }
.mag { width: 12px; height: 12px; color: #666; margin-right: 2px; }
.window-controls { display: flex; padding-left: 3px; color: #333; }
.window-controls button { width: 27px; }
.window-controls button:last-child { width: 26px; }
.window-controls svg { width: 13px; height: 13px; }

/* Ribbon */
.ribbon { display: flex; align-items: stretch; height: 55px; background: #f7f7f7; border-bottom: 1px solid #9b9b9b; font-size: 9px; color: #a5a5a5; }
.group { display: flex; padding: 0 1px; border-right: 1px solid #ccc; }
.group.last { flex: 1; padding-left: 3px; border: 0; }
.ribbon button { color: inherit; white-space: nowrap; }
.ribbon .group svg { color: #b5b5b5; }
.ribbon .big { position: relative; flex-direction: column; justify-content: flex-start; padding-top: 4px; line-height: 13px; text-align: center; }
.big i.dd { position: absolute; bottom: 3px; left: calc(50% - 4px); color: #777; }
.ribbon .live { color: #222; }
.ribbon .pressed { background: #b3b3b3; outline: 1px solid #888; outline-offset: -1px; }
.stack { display: flex; flex-direction: column; padding: 1px 0 0 2px; }
.stack button { justify-content: flex-start; gap: 3px; height: 17px; }
.stack svg { width: 13px; height: 13px; }
.w24 { width: 24px; } .w36 { width: 36px; } .w44 { width: 44px; } .w48 { width: 48px; }
.w56 { width: 56px; } .w60 { width: 60px; } .w64 { width: 64px; } .w80 { width: 80px; } .w108 { width: 108px; }
.collapse { align-self: flex-end; width: 17px; height: 18px; }
.ribbon .collapse { color: #222; }
.collapse svg { width: 9px; height: 9px; stroke-width: 2; }

/* Work area */
.work { display: grid; flex: 1; min-height: 0; grid-template: 18px minmax(0, 1fr) / 226px minmax(0, 1fr); background: #f7f7f7; }
.tabs { display: flex; grid-area: 1 / 1 / 2 / 3; justify-self: start; z-index: 1; }
.tabs button { height: 18px; padding: 0 6px; background: #d3d3d3; border: solid #8d8d8d; border-width: 0 1px 1px 0; }
.tabs button.active { background: #f7f7f7; border-bottom-color: #f7f7f7; font-weight: 700; }
.side { grid-area: 2 / 1; display: grid; grid-template-columns: 22px 21px minmax(0, 1fr); align-items: start; border-right: 1px solid #999; }
.rail { display: flex; flex-direction: column; align-items: center; gap: 4px; padding: 10px 0 5px; border: solid #aaa; border-width: 0 1px 1px 0; color: #b5b5b5; }
.rail::before { content: ""; width: 18px; margin-top: -9px; margin-bottom: 4px; border-top: 1px dotted #999; }
.rail + .rail { border-right: 0; }
.rail hr { width: 18px; margin: 0; border: 0; border-top: 1px solid #aaa; }
.rail svg { width: 13px; height: 14px; }
.panel { align-self: stretch; display: flex; flex-direction: column; padding: 3px 0 0 1px; }
.grip { display: flex; align-items: center; justify-content: center; width: 178px; height: 14px; border: solid #bbb; border-width: 1px 0; }
.dot { width: 4px; height: 4px; border: 1px solid #888; border-radius: 50%; }
.manager-tabs { display: flex; height: 20px; padding-top: 3px; border-bottom: 1px solid #bbb; }
.manager-tabs button { width: 27px; height: 17px; background: #d3d3d3; border: 1px solid #aaa; border-left-width: 0; }
.manager-tabs button.active { background: #f7f7f7; border-bottom-color: #f7f7f7; }
.manager-tabs svg { width: 13px; height: 13px; }
.panel-title { display: flex; align-items: center; gap: 4px; height: 30px; padding: 0 9px 2px 7px; }
.panel-title h2 { flex: 1; font-size: 11px; }
.panel-title button { color: #28586a; }
.panel-title button svg { width: 13px; height: 13px; }
.confirm { display: flex; align-items: center; gap: 6px; height: 21px; padding: 0 0 1px 5px; }
.confirm svg { width: 13px; height: 13px; }
.ok { color: #32962e; }
.ok svg { fill: currentColor; }
.cancel { color: #c62825; }
.cancel svg { stroke-width: 2.500; }
.box { margin: 0 4px 0 2px; border-top: 1px solid #b5b5b5; padding-bottom: 5px; }
.box + .box { padding-bottom: 8px; }
.box h3 { display: flex; align-items: center; justify-content: space-between; height: 16px; padding: 0 5px 0 3px; }
.box h3 svg { width: 11px; height: 11px; color: #555; stroke-width: 1.500; }
.message { height: 20px; margin-top: 1px; padding: 3px; background: #84ff80; color: #185018; }
.pick { display: flex; align-items: center; height: 20px; margin-top: 5px; padding: 0 4px 0 6px; }
.pick svg { width: 15px; height: 15px; margin-right: 6px; }
.swatch { width: 10px; height: 20px; }
.blue { background: #5ba9f7; }
.pink { background: #f170bd; }
.violet { background: #7b00ee; }
.pick input { flex: 1; min-width: 0; height: 20px; padding: 0 2px 2px; border: 1px solid #aaa; border-left: 0; border-radius: 0; background: #fff; }
.pick.focus input { border: 1px solid #64b5d0; background: #cfe5f5; }
.opts { display: flex; flex-direction: column; gap: 3px; padding-top: 6px; }
.opt { display: flex; align-items: center; gap: 4px; height: 20px; padding: 0 4px 0 3px; color: #444; }
.opt > button { width: 20px; height: 20px; border: 1px solid #8b9ba5; background: #fafafa; }
.opt > button svg { width: 16px; height: 16px; }
.opt > .down { background: #c8cacc; border: 1px solid #555; }
.opt input { flex: 1; min-width: 0; height: 19px; padding: 0 2px; border: 1px solid #bbb; background: #f8f8f8; color: #888; }
.spin { display: flex; flex-direction: column; gap: 1px; width: 12px; }
.spin button { height: 9px; border: 1px solid #ccc; border-radius: 2px; background: #f1f1f1; color: #999; }
.spin svg { width: 8px; height: 6px; }
.flip { transform: rotate(180deg); }
.flipnormal { display: flex; align-items: center; gap: 4px; padding: 7px 0 0 26px; color: #444; }
.flipnormal input { appearance: none; width: 12px; height: 12px; margin: 0; border: 1px solid #286a88; background: #fff; }

/* Graphics area */
.viewport { position: relative; grid-area: 1 / 2 / 3 / 3; display: grid; grid-template: minmax(0, 1fr) / minmax(0, 1fr); background: #fff; }
.scene-view { grid-area: 1 / 1; width: 100%; height: 100%; stroke: none; }
.triad text { font: 10px Lato, sans-serif; }
.overlay { grid-area: 1 / 1; z-index: 1; }
.top-row { display: grid; grid-template-columns: 1fr auto 1fr; height: 20px; align-items: center; }
.headsup { display: flex; grid-column: 2; color: #555; }
.headsup .ico { width: 17px; }
.headsup .dd { height: 20px; width: 10px; }
.headsup svg { width: 13px; height: 13px; }
.doc-controls { display: flex; justify-content: flex-end; padding-right: 4px; color: #808890; }
.doc-controls button { width: 17px; }
.doc-controls svg { width: 12px; height: 12px; }
.below { display: flex; align-items: flex-start; }
.tree { display: flex; align-items: center; gap: 2px; flex: 1; height: 22px; padding-left: 3px; color: #111; }
.tree .small { border-width: 3px 0 3px 4px; border-left-color: #111; margin: 0 6px 0 0; }
.tree svg { width: 12px; height: 12px; }
.corner { display: flex; gap: 9px; padding: 1px 3px 0 0; opacity: .3; }
.corner svg { width: 20px; height: 20px; }
.corner .cancel { margin-top: 20px; }
.corner .cancel svg { stroke-width: 4; }
.taskpane { display: flex; flex-direction: column; width: 21px; margin-top: 18px; border: 1px solid #999; border-right: 0; }
.taskpane button { height: 20px; background: #d3d3d3; border-bottom: 1px solid #aaa; }
.taskpane .active { background: #f7f7f7; color: #205c70; }
.handle { position: absolute; left: -1px; top: calc(50% - 16px); width: 8px; height: 33px; border: 1px solid #999; border-left: 0; background: #f7f7f7; z-index: 1; }

/* Sheet tabs and status bar */
.sheets { display: flex; height: 15px; padding-left: 44px; background: #f7f7f7; }
.sheet-nav { display: flex; width: 54px; border: 1px solid #75758a; background: #a9a9bd; color: #77778c; }
.sheet-nav button { flex: 1; border-right: 1px solid #85859a; }
.sheet-nav svg { width: 7px; height: 7px; fill: currentColor; }
.sheet { padding: 0 8px; background: #d3d3d3; border-right: 1px solid #999; border-top: 1px solid #999; }
.sheet.active { padding: 0 10px; background: #fff; font-weight: 700; border-top-color: #fff; }
.sheet.wide { padding-right: 18px; }
.sheet-fill { flex: 1; border-top: 1px solid #999; }
.status { display: flex; align-items: center; height: 15px; background: #f7f7f7; border-top: 1px solid #aaa; color: #111; }
.warn { width: 11px; height: 11px; margin-left: auto; }
.units { margin-left: 54px; color: #999; }
.unit-up { width: 8px; margin: 0 15px 0 14px; color: #666; }
.unit-up::before { content: ""; border: solid transparent; border-width: 0 2px 3px; border-bottom-color: currentColor; }
.tag { width: 12px; height: 12px; }
```
